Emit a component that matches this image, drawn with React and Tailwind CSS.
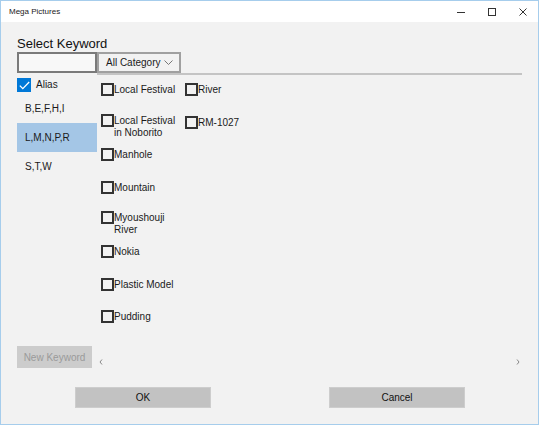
import React from 'react';

const font = { fontFamily: '"Liberation Sans", Arial, sans-serif' };

const col1 = [
    { label: ['Local Festival'], h: 'h-[31px]' },
    { label: ['Local Festival', 'in Noborito'], h: 'h-[34px]' },
    { label: ['Manhole'], h: 'h-[33px]' },
    { label: ['Mountain'], h: 'h-[30px]' },
    { label: ['Myoushouji', 'River'], h: 'h-[34px]' },
    { label: ['Nokia'], h: 'h-[33px]' },
    { label: ['Plastic Model'], h: 'h-[32px]' },
    { label: ['Pudding'], h: 'h-[32px]' },
];

const col2 = [
    { label: ['River'], h: 'h-[33px]' },
    { label: ['RM-1027'], h: 'h-[33px]' },
];

function KeywordItem({ label, h }) {
    return (
        <div className={`flex items-start ${h}`}>
            <div className="w-[13px] h-[13px] border-2 border-[#333333] shrink-0" />
            <div className="flex flex-col pt-[1px]">
                {label.map(line => (
                    <span key={line} className="text-[10px] leading-[12px] text-[#1a1a1a] whitespace-nowrap">{line}</span>
                ))}
            </div>
        </div>
    );
}

export default function App() {
    return (
        <div style={font} className="w-[539px] h-[425px] border border-[#a6cdec] flex flex-col bg-[#f2f2f2] overflow-hidden">
            {/* Title bar */}
            <div className="h-[21px] bg-white flex items-center shrink-0">
                <span className="ml-[8px] text-[8px] text-[#1a1a1a]">Mega Pictures</span>
                <div className="ml-auto flex h-full">
                    <div className="w-[31px] flex items-center justify-center">
                        <svg width="8" height="8" viewBox="0 0 8 8"><path d="M0 4.5h8" stroke="#333" strokeWidth="1" /></svg>
                    </div>
                    <div className="w-[31px] flex items-center justify-center">
                        <svg width="8" height="8" viewBox="0 0 8 8"><rect x="0.5" y="0.5" width="7" height="7" fill="none" stroke="#333" strokeWidth="1" /></svg>
                    </div>
                    <div className="w-[31px] flex items-center justify-center">
                        <svg width="8" height="8" viewBox="0 0 8 8"><path d="M0.5 0.5L7.5 7.5M7.5 0.5L0.5 7.5" stroke="#333" strokeWidth="1" /></svg>
                    </div>
                </div>
            </div>

            {/* Body */}
            <div className="flex-1 flex flex-col px-[16px] pt-[14px]">
                <div className="h-[16px] text-[13px] leading-[16px] text-[#111]">Select Keyword</div>

                <div className="flex">
                    <div className="w-[80px] h-[21px] border-2 border-[#7a7a7a] bg-[#f8f8f8] shrink-0" />
                    <div className="w-[84px] h-[21px] border-2 border-[#a0a0a0] flex items-center pl-[7px] pr-[6px]">
                        <span className="text-[10px] leading-[12px] text-[#1a1a1a] whitespace-nowrap">All Category</span>
                        <svg className="ml-auto" width="9" height="6" viewBox="0 0 9 6"><path d="M0.5 0.5L4.5 4.5L8.5 0.5" fill="none" stroke="#777" strokeWidth="1" /></svg>
                    </div>
                </div>
                <div className="flex">
                    <div className="w-[80px] shrink-0" />
                    <div className="h-[2px] w-[425px] bg-[#c4c4c4]" />
                </div>

                {/* Main area */}
                <div className="h-[271px] flex">
                    <div className="w-[80px] shrink-0 flex flex-col">
                        <div className="h-[19px] flex items-start pt-[3px]">
                            <div className="w-[14px] h-[14px] bg-[#0078d7] flex items-center justify-center">
                                <svg width="11" height="9" viewBox="0 0 11 9"><path d="M0.8 4.6L3.8 7.6L10.2 1" fill="none" stroke="#fff" strokeWidth="1.3" /></svg>
                            </div>
                            <span className="ml-[5px] text-[10px] leading-[14px] text-[#1a1a1a]">Alias</span>
                        </div>
                        <div className="h-[29px] flex items-center pl-[8px] text-[10px] text-[#1a1a1a]">B,E,F,H,I</div>
                        <div className="h-[29px] flex items-center pl-[8px] text-[10px] text-[#1a1a1a] bg-[#a4c6e6]">L,M,N,P,R</div>
                        <div className="h-[29px] flex items-center pl-[8px] text-[10px] text-[#1a1a1a]">S,T,W</div>
                    </div>
                    <div className="flex pl-[4px] pt-[8px]">
                        <div className="w-[84px] flex flex-col">
                            {col1.map(k => <KeywordItem key={k.label.join(' ')} {...k} />)}
                        </div>
                        <div className="flex flex-col">
                            {col2.map(k => <KeywordItem key={k.label.join(' ')} {...k} />)}
                        </div>
                    </div>
                </div>

                {/* New keyword + scroll */}
                <div className="h-[22px] flex">
                    <div className="w-[75px] h-[22px] bg-[#cccccc] flex items-center justify-center text-[10px] text-[#9a9a9a] shrink-0 whitespace-nowrap">New Keyword</div>
                    <div className="flex-1 flex items-end pb-[3px] pl-[7px] pr-[2px]">
                        <svg width="4" height="6" viewBox="0 0 4 6"><path d="M3 0.5L1 3L3 5.5" fill="none" stroke="#888" strokeWidth="1" /></svg>
                        <svg className="ml-auto" width="4" height="6" viewBox="0 0 4 6"><path d="M1 0.5L3 3L1 5.5" fill="none" stroke="#888" strokeWidth="1" /></svg>
                    </div>
                </div>

                {/* Buttons */}
                <div className="mt-[19px] flex">
                    <div className="ml-[58px] w-[136px] h-[21px] bg-[#c2c2c2] border border-[#cdcdcd] flex items-center justify-center text-[10px] text-[#111]">OK</div>
                    <div className="ml-[118px] w-[136px] h-[21px] bg-[#c2c2c2] border border-[#cdcdcd] flex items-center justify-center text-[10px] text-[#111]">Cancel</div>
                </div>
            </div>
        </div>
    );
}
